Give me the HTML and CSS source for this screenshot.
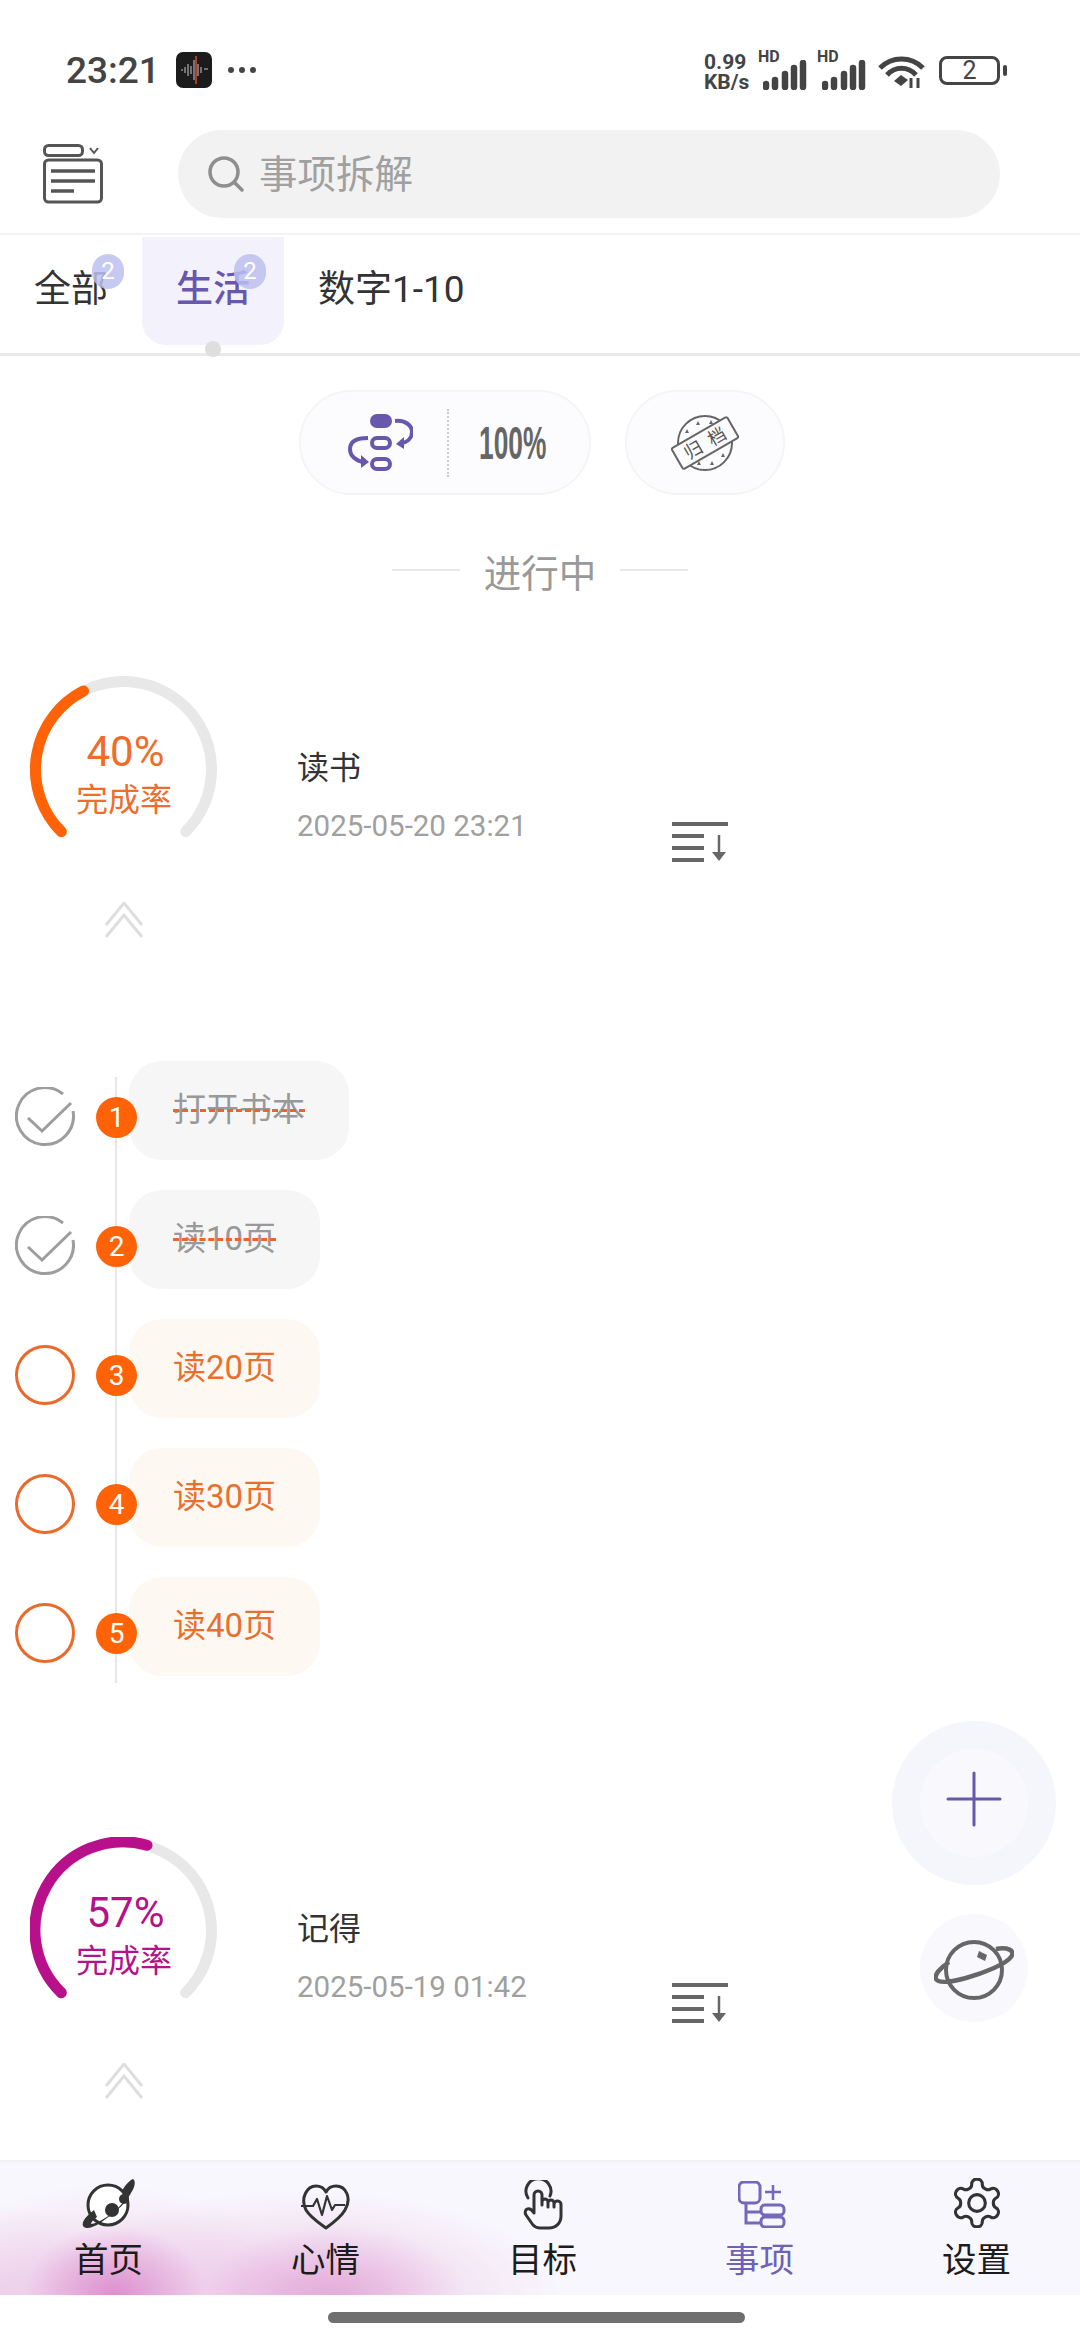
FILE: index.html
```html
<!DOCTYPE html>
<html lang="zh-CN">
<head>
    <meta charset="UTF-8">
    <meta name="viewport" content="width=device-width, initial-scale=1.0">
    <title>事项拆解</title>
    <link rel="stylesheet" href="styles.css">
</head>
<body>
    <div class="statusbar">
        <span class="clock">23:21</span>
        <svg class="app-icon" width="36" height="36" viewBox="0 0 36 36">
            <rect width="36" height="36" rx="7" fill="#1c1c1c"/>
            <path d="M5 18h2M9 15v6M12 12v12M15 14v8M18 8v20M22 12v12M25 15v6M28 17h4" stroke="#8a8a8a" stroke-width="1.6"/>
            <path d="M20 4v28" stroke="#d8452a" stroke-width="1.6"/>
        </svg>
        <span class="more-dots"><i></i><i></i><i></i></span>
        <div class="status-right">
            <div class="speed"><span>0.99</span><span>KB/s</span></div>
            <div class="signal">
                <span class="hd">HD</span>
                <svg width="44" height="30" viewBox="0 0 44 30"><path d="M3 24v3M12 20v7M22 14v13M31 8v19M40 3v24" stroke="#444" stroke-width="6.500" stroke-linecap="round"/></svg>
            </div>
            <div class="signal">
                <span class="hd">HD</span>
                <svg width="44" height="30" viewBox="0 0 44 30"><path d="M3 24v3M12 20v7M22 14v13M31 8v19M40 3v24" stroke="#444" stroke-width="6.500" stroke-linecap="round"/></svg>
            </div>
            <svg class="wifi" width="47" height="32" viewBox="0 0 47 32">
                <g fill="none" stroke="#444" stroke-width="5">
                    <path d="M2 12C14 0 33 0 45 12"/>
                    <path d="M9 19C17 10 30 10 38 19"/>
                </g>
                <path d="M16 25l7-6 7 5-7 6z" fill="#444"/>
                <path d="M33 22v10M40 22v10" stroke="#444" stroke-width="3"/>
            </svg>
            <div class="battery"><span>2</span></div>
            <i class="battery-tip"></i>
        </div>
    </div>

    <div class="header">
        <svg class="menu-icon" width="60" height="60" viewBox="0 0 60 60" fill="none" stroke="#555" stroke-width="3">
            <rect x="1.5" y="1.5" width="38" height="10" rx="4"/>
            <path d="M47 4l4 5 4-5" stroke-width="2"/>
            <rect x="1.5" y="16" width="57" height="42" rx="4"/>
            <path d="M8 27h44M8 37h44M8 47h23" stroke-width="3.5"/>
        </svg>
        <div class="search">
            <svg width="38" height="38" viewBox="0 0 38 38" fill="none" stroke="#8e8e8e" stroke-width="3.5" stroke-linecap="round">
                <circle cx="17" cy="17" r="14"/>
                <path d="M28 28l7 7"/>
            </svg>
            <span class="search-text">事项拆解</span>
        </div>
    </div>

    <div class="tabs">
        <div class="tab">全部<span class="badge">2</span></div>
        <div class="tab active">生活<span class="badge">2</span></div>
        <div class="tab">数字1-10</div>
    </div>

    <div class="main">
        <div class="tools">
            <div class="tool-pill">
                <svg width="65" height="57" viewBox="0 0 65 57" fill="none" stroke="#6757ad" stroke-width="4">
                    <rect x="22" y="0" width="22" height="14" rx="7" fill="#6757ad" stroke="none"/>
                    <rect x="24" y="24" width="18" height="10" rx="5"/>
                    <rect x="24" y="45" width="18" height="10" rx="5"/>
                    <path d="M47 7c10-1 17 4 17 11s-6 11-13 12"/>
                    <path d="M56 23l-8 7 8 5" fill="#6757ad" stroke="none"/>
                    <path d="M20 24C8 24 2 28 2 35s6 12 14 13"/>
                    <path d="M13 41l8 7-8 6z" fill="#6757ad" stroke="none"/>
                </svg>
                <i class="dotted"></i>
                <span class="percent">100%</span>
            </div>
            <div class="tool-round">
                <svg width="68" height="64" viewBox="0 0 68 64">
                    <circle cx="34" cy="32" r="27" fill="none" stroke="#666" stroke-width="2"/>
                    <path d="M16 18l2 4h-4zM27 10l2 4h-4zM40 9l2 4h-4zM50 14l2 4h-4zM18 44l2 4h-4zM28 50l2 4h-4zM41 50l2 4h-4zM52 42l2 4h-4z" fill="#666"/>
                    <g transform="rotate(-30 34 32)">
                        <rect x="2" y="20" width="64" height="24" rx="2" fill="#fcfcfe" stroke="#666" stroke-width="2"/>
                        <text x="34" y="38.500" class="stamp-text" text-anchor="middle">归 档</text>
                    </g>
                </svg>
            </div>
        </div>

        <div class="section-title"><i></i><span>进行中</span><i></i></div>

        <div class="goal">
            <div class="goal-row">
                <div class="arc arc-orange">
                    <svg width="187" height="170" viewBox="0 0 187 170" fill="none" stroke-width="11" stroke-linecap="round">
                        <path d="M31.3 155.7A88 88 0 1 1 155.7 155.7" stroke="#e8e8e8"/>
                        <path d="M31.3 155.7A88 88 0 0 1 53.5 15" stroke="#ff6207"/>
                    </svg>
                    <div class="arc-label"><span class="arc-num">40%</span><span class="arc-sub">完成率</span></div>
                </div>
                <div class="goal-info">
                    <div class="goal-name">读书</div>
                    <div class="goal-date">2025-05-20 23:21</div>
                </div>
                <svg class="sort-icon" width="56" height="40" viewBox="0 0 56 40" fill="none" stroke="#666" stroke-width="4">
                    <path d="M0 2h56M0 14h32M0 26h32M0 38h32"/>
                    <path d="M47 13v20" stroke-width="2.5"/>
                    <path d="M40 30h14l-7 9z" fill="#666" stroke="none"/>
                </svg>
            </div>
            <svg class="chevrons" width="38" height="36" viewBox="0 0 38 36" fill="none" stroke="#dedede" stroke-width="3">
                <path d="M1 23L19 1l18 22M1 35l18-22 18 22"/>
            </svg>
        </div>

        <div class="steps">
            <div class="step">
                <svg class="check" width="60" height="60" viewBox="0 0 60 60" fill="none" stroke="#9d9d9d" stroke-width="3">
                    <path d="M48 7A28.500 28.500 0 1 0 58 24"/>
                    <path d="M13 31l14 13L56 16"/>
                </svg>
                <span class="num">1</span>
                <span class="pill done"><s>打开书本</s></span>
            </div>
            <div class="step">
                <svg class="check" width="60" height="60" viewBox="0 0 60 60" fill="none" stroke="#9d9d9d" stroke-width="3">
                    <path d="M48 7A28.500 28.500 0 1 0 58 24"/>
                    <path d="M13 31l14 13L56 16"/>
                </svg>
                <span class="num">2</span>
                <span class="pill done"><s>读10页</s></span>
            </div>
            <div class="step">
                <i class="ring"></i>
                <span class="num">3</span>
                <span class="pill">读20页</span>
            </div>
            <div class="step">
                <i class="ring"></i>
                <span class="num">4</span>
                <span class="pill">读30页</span>
            </div>
            <div class="step">
                <i class="ring"></i>
                <span class="num">5</span>
                <span class="pill">读40页</span>
            </div>
        </div>

        <div class="goal">
            <div class="goal-row">
                <div class="arc arc-magenta">
                    <svg width="187" height="170" viewBox="0 0 187 170" fill="none" stroke-width="11" stroke-linecap="round">
                        <path d="M31.300 155.700A88 88 0 1 1 155.700 155.700" stroke="#e8e8e8"/>
                        <path d="M31.300 155.700A88 88 0 0 1 117 8.200" stroke="#b8108a"/>
                    </svg>
                    <div class="arc-label"><span class="arc-num">57%</span><span class="arc-sub">完成率</span></div>
                </div>
                <div class="goal-info">
                    <div class="goal-name">记得</div>
                    <div class="goal-date">2025-05-19 01:42</div>
                </div>
                <svg class="sort-icon" width="56" height="40" viewBox="0 0 56 40" fill="none" stroke="#666" stroke-width="4">
                    <path d="M0 2h56M0 14h32M0 26h32M0 38h32"/>
                    <path d="M47 13v20" stroke-width="2.5"/>
                    <path d="M40 30h14l-7 9z" fill="#666" stroke="none"/>
                </svg>
            </div>
            <svg class="chevrons" width="38" height="36" viewBox="0 0 38 36" fill="none" stroke="#dedede" stroke-width="3">
                <path d="M1 23L19 1l18 22M1 35l18-22 18 22"/>
            </svg>
        </div>

        <div class="fabs">
            <div class="fab-add">
                <div class="fab-add-inner">
                    <svg width="56" height="56" viewBox="0 0 56 56" stroke="#6757ad" stroke-width="3" stroke-linecap="round">
                        <path d="M2 28h52M28 2v52"/>
                    </svg>
                </div>
            </div>
            <div class="fab-planet">
                <svg width="80" height="64" viewBox="0 0 80 64" fill="none" stroke="#666" stroke-width="4">
                    <circle cx="40" cy="32" r="28"/>
                    <path d="M15 24C6 30 0 37 2 41s12 4 30-1 40-14 45-21-4-10-15-8" stroke-width="4.500"/>
                    <path d="M45 13l8 4-2 6-8-4z" fill="#666" stroke="none"/>
                </svg>
            </div>
        </div>
    </div>

    <div class="nav">
        <div class="nav-item">
            <svg width="54" height="52" viewBox="0 0 54 52">
                <circle cx="26" cy="27" r="20" fill="#fff" stroke="#333" stroke-width="3"/>
                <path d="M1 48c-2-5 6-12 11-16l3 7c-4 3-6 5-6 7 4 0 12-4 20-10s14-13 16-19l-5-4c3-6 8-11 11-12 3 2 2 8-2 14-4 8-13 18-24 25C15 48 5 53 1 48z" fill="#333"/>
                <circle cx="30" cy="32" r="7" fill="#333"/>
                <circle cx="42" cy="21" r="5" fill="#333"/>
            </svg>
            <span>首页</span>
        </div>
        <div class="nav-item">
            <svg width="50" height="46" viewBox="0 0 50 46" fill="none" stroke="#333" stroke-width="3" stroke-linejoin="round">
                <path d="M5 26C-1 14 6 2 15 2c5 0 8 2 10 6 2-4 6-6 10-6 10 0 16 12 9 24-4 7-12 13-19 18-7-5-16-11-20-18z"/>
                <path d="M0 22h12l4-7 5 16 5-19 5 14 3-5h10" stroke-width="2.200"/>
            </svg>
            <span>心情</span>
        </div>
        <div class="nav-item">
            <svg width="40" height="50" viewBox="22 12 40 50" fill="none" stroke="#333" stroke-width="3" stroke-linecap="round" stroke-linejoin="round">
                <path d="M27 30A12.500 12.500 0 1 1 49 28"/>
                <path d="M33 45V27a4 4 0 0 1 8 0V37M41 34a3 3 0 0 1 6 0V39M47 35a3 3 0 0 1 6 0V39M53 36a3 3 0 0 1 7 1V48C60 55 55 60 48 60H39C36 60 34 59 32 57L25 47C22 42 28 37 33 45"/>
            </svg>
            <span>目标</span>
        </div>
        <div class="nav-item nav-active">
            <svg class="items-icon" width="48" height="47" viewBox="1 1 48 47" fill="none" stroke="#7468bb" stroke-width="3">
                <rect x="2" y="2" width="21" height="21" rx="5"/>
                <path d="M9 23v20h15M9 32h15"/>
                <rect x="24" y="25" width="23" height="10" rx="4"/>
                <rect x="24" y="37" width="23" height="10" rx="4"/>
                <path d="M28 12h16M36 5v15" stroke-width="2.500"/>
            </svg>
            <span>事项</span>
        </div>
        <div class="nav-item">
            <svg class="gear-icon" width="50" height="50" viewBox="1.500 1.500 21 21" fill="none" stroke="#333" stroke-width="1.300" stroke-linejoin="round">
                <path d="M12.220 2h-.440a2 2 0 0 0-2 2v.180a2 2 0 0 1-1 1.730l-.430.250a2 2 0 0 1-2 0l-.150-.080a2 2 0 0 0-2.730.730l-.220.380a2 2 0 0 0 .730 2.730l.150.100a2 2 0 0 1 1 1.720v.510a2 2 0 0 1-1 1.740l-.150.090a2 2 0 0 0-.730 2.730l.220.380a2 2 0 0 0 2.730.730l.150-.080a2 2 0 0 1 2 0l.430.250a2 2 0 0 1 1 1.730V20a2 2 0 0 0 2 2h.440a2 2 0 0 0 2-2v-.180a2 2 0 0 1 1-1.730l.430-.250a2 2 0 0 1 2 0l.150.080a2 2 0 0 0 2.730-.730l.220-.390a2 2 0 0 0-.730-2.730l-.150-.080a2 2 0 0 1-1-1.740v-.500a2 2 0 0 1 1-1.740l.150-.090a2 2 0 0 0 .730-2.730l-.220-.380a2 2 0 0 0-2.730-.730l-.150.080a2 2 0 0 1-2 0l-.430-.250a2 2 0 0 1-1-1.730V4a2 2 0 0 0-2-2z"/>
                <circle cx="12" cy="12" r="3.500"/>
            </svg>
            <span>设置</span>
        </div>
    </div>

    <div class="home-area"><i class="home-bar"></i></div>
</body>
</html>
```

FILE: styles.css
```css
* { box-sizing: border-box; }
html, body { margin: 0; padding: 0; }
body {
    width: 1080px;
    height: 2339px;
    overflow: hidden;
    display: flex;
    flex-direction: column;
    background: #fff;
    color: #333;
    font-family: Roboto, "Noto Sans CJK SC", sans-serif;
}
i { display: block; font-style: normal; }

/* status bar */
.statusbar {
    height: 130px;
    flex: none;
    display: flex;
    align-items: center;
    padding: 10px 73px 0 66px;
}
.clock { font-size: 37px; font-weight: 500; color: #444; width: 110px; }
.more-dots { display: flex; gap: 5px; margin-left: 16px; }
.more-dots i { width: 6px; height: 6px; border-radius: 50%; background: #444; }
.status-right { margin-left: auto; display: flex; align-items: center; }
.speed {
    display: flex;
    flex-direction: column;
    font-size: 21px;
    line-height: 20px;
    font-weight: 700;
    color: #444;
    width: 54px;
    margin-top: 4px;
}
.signal { position: relative; width: 59px; height: 34px; }
.signal svg { position: absolute; right: 10px; bottom: -3px; }
.hd { position: absolute; left: 0; top: -3px; font-size: 16px; line-height: 14px; font-weight: 700; color: #444; }
.wifi { margin: 4px 14px 0 2px; }
.battery {
    width: 61px;
    height: 29px;
    border: 3px solid #444;
    border-radius: 8px;
    text-align: center;
    font-size: 25px;
    line-height: 23px;
    color: #444;
}
.battery-tip { width: 4px; height: 11px; margin-left: 3px; border-radius: 2px; background: #444; }

/* search header */
.header {
    height: 103px;
    flex: none;
    display: flex;
    align-items: flex-start;
    padding-left: 43px;
}
.menu-icon { margin: 14px 75px 0 0; }
.search {
    width: 822px;
    height: 88px;
    border-radius: 44px;
    background: #f2f2f2;
    display: flex;
    align-items: center;
    padding-left: 29px;
    gap: 14px;
    font-size: 38.5px;
    color: #a0a0a0;
}
.search-text { margin-bottom: 6px; }

/* tabs */
.tabs {
    height: 123px;
    flex: none;
    display: flex;
    padding-top: 2px;
    border-top: 2px solid #f3f3f3;
    border-bottom: 3px solid #e8e8e8;
}
.tab {
    position: relative;
    height: 108px;
    padding: 0 34px 10px;
    display: flex;
    align-items: center;
    font-size: 37px;
    color: #333;
}
.tab.active {
    background: #f3f2fc;
    border-radius: 0 0 24px 24px;
    color: #6757ad;
    font-weight: 500;
}
.tab.active::after {
    content: "";
    position: absolute;
    left: 63px;
    bottom: -12px;
    width: 16px;
    height: 16px;
    border-radius: 50%;
    background: #dedede;
}
.badge {
    position: absolute;
    top: 17px;
    right: 18px;
    width: 32px;
    height: 35px;
    border-radius: 16px;
    background: rgba(188, 192, 238, .85);
    color: #fff;
    font-size: 24px;
    font-weight: 400;
    line-height: 35px;
    text-align: center;
}

/* main scroll area */
.main { position: relative; flex: 1; min-height: 0; overflow: hidden; }
.tools {
    display: flex;
    justify-content: center;
    gap: 34px;
    margin-top: 34px;
    padding-left: 4px;
}
.tool-pill, .tool-round {
    height: 105px;
    border: 2px solid #f5f5f5;
    border-radius: 53px;
    background: #fcfcfe;
    display: flex;
    align-items: center;
}
.tool-pill { width: 292px; padding-left: 47px; }
.tool-pill svg { flex: none; }
.tool-round { width: 160px; justify-content: center; }
.dotted { height: 68px; margin: 0 30px 0 34px; border-left: 2px dotted #ccc; flex: none; }
.percent {
    font-family: "Liberation Sans", sans-serif;
    font-size: 47px;
    font-weight: 700;
    color: #666;
    display: inline-block;
    flex: none;
    transform: scaleX(.56);
    transform-origin: left center;
}
.stamp-text { font-family: "Noto Sans CJK SC", sans-serif; font-size: 18px; word-spacing: 5px; fill: #555; }

.section-title {
    display: flex;
    justify-content: center;
    align-items: center;
    gap: 24px;
    height: 54px;
    margin-top: 48px;
    font-size: 37.5px;
    color: #999;
}
.section-title i { width: 68px; height: 2px; background: #e8e8e8; }

/* goal card */
.goal { padding-left: 30px; margin-top: 79px; }
.goal-row { display: flex; align-items: flex-start; }
.arc { position: relative; width: 187px; height: 170px; flex: none; }
.arc-label {
    position: absolute;
    left: 0;
    right: 0;
    top: 52px;
    display: flex;
    flex-direction: column;
    align-items: center;
}
.arc-num { font-size: 42px; line-height: 48px; margin-left: 4px; }
.arc-sub { font-size: 32px; line-height: 48px; margin-left: 1px; }
.arc-orange .arc-label { color: #ef6c2b; }
.arc-magenta .arc-label { color: #b3128a; }
.goal-info { width: 375px; margin: 70px 0 0 80px; flex: none; }
.goal-name { font-size: 32px; line-height: 44px; color: #333; }
.goal-date { font-size: 29.5px; line-height: 40px; margin-top: 16px; color: #a0a0a0; }
.sort-icon { margin-top: 146px; flex: none; }
.chevrons { display: block; margin: 40px 0 0 75px; }

/* step list */
.steps { position: relative; margin: 123px 0 131px; padding-left: 15px; display: flex; flex-direction: column; }
.steps::before {
    content: "";
    position: absolute;
    left: 115px;
    top: 16px;
    bottom: 23px;
    width: 2px;
    background: #e6e6e6;
}
.step { display: flex; align-items: flex-start; margin-bottom: 30px; }
.check, .ring { width: 60px; height: 60px; margin-top: 26px; flex: none; }
.ring { border: 3px solid #e96a2a; border-radius: 50%; }
.num {
    position: relative;
    z-index: 1;
    width: 41px;
    height: 41px;
    margin: 36px -8px 0 21px;
    flex: none;
    border-radius: 50%;
    background: #ff6207;
    color: #fff;
    font-size: 28px;
    line-height: 41px;
    text-align: center;
}
.pill {
    height: 99px;
    padding: 0 44px;
    border-radius: 33px;
    background: #fef8f3;
    color: #e8702f;
    font-size: 33px;
    line-height: 97px;
}
.pill.done { background: #f6f6f6; color: #999; }
.pill.done s {
    text-decoration: line-through dashed #f0622a 3px;
}

/* floating buttons */
.fabs {
    position: absolute;
    right: 24px;
    top: 1365px;
    display: flex;
    flex-direction: column;
    align-items: center;
    gap: 29px;
}
.fab-add {
    width: 164px;
    height: 164px;
    border-radius: 50%;
    background: #f5f5fc;
    display: flex;
    align-items: center;
    justify-content: center;
}
.fab-add-inner {
    width: 108px;
    height: 108px;
    border-radius: 50%;
    background: #f9f9fd;
    display: flex;
    align-items: center;
    justify-content: center;
    padding-bottom: 8px;
}
.fab-planet {
    width: 108px;
    height: 108px;
    border-radius: 50%;
    background: #f8f8fd;
    display: flex;
    align-items: center;
    justify-content: center;
    padding-top: 4px;
}

/* bottom nav */
.nav {
    height: 135px;
    flex: none;
    display: grid;
    grid-template-columns: repeat(5, 217px);
    border-top: 2px solid #f0f0f0;
    background:
        radial-gradient(ellipse 90px 70px at 115px 100%, rgba(214, 120, 195, .7), transparent),
        radial-gradient(ellipse 130px 70px at 335px 100%, rgba(220, 145, 205, .55), transparent),
        radial-gradient(ellipse 190px 110px at 105px 100%, rgba(232, 180, 222, .6), transparent),
        radial-gradient(ellipse 260px 105px at 300px 100%, rgba(232, 180, 222, .7), transparent),
        radial-gradient(ellipse 130px 90px at 0 100%, rgba(232, 190, 225, .5), transparent),
        #f8f7fd;
}
.nav-item {
    position: relative;
    display: flex;
    flex-direction: column;
    align-items: center;
    justify-content: flex-end;
    padding-bottom: 13px;
    font-size: 34.5px;
    line-height: 44px;
    color: #1c1c1c;
}
.nav-item svg { margin-bottom: 8px; }
.nav-item .items-icon { margin-left: 4px; margin-bottom: 10px; }
.nav-item .gear-icon { margin-bottom: 10px; }
.nav-active { color: #6e62b6; }

.home-area { height: 44px; flex: none; padding: 17px 0 0 328px; }
.home-bar { width: 417px; height: 11px; border-radius: 6px; background: #6f6f6f; }
```
